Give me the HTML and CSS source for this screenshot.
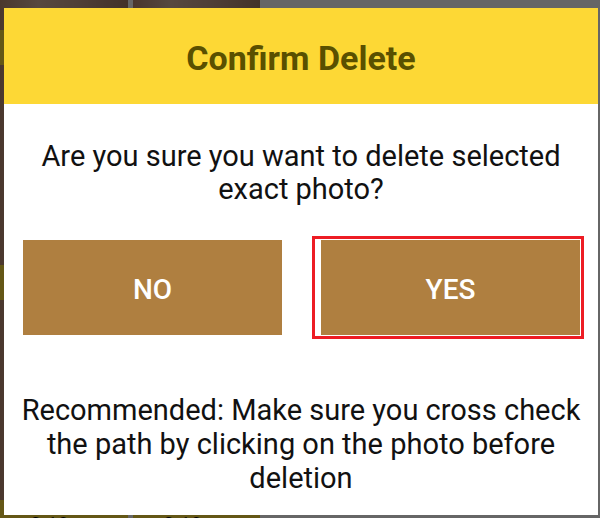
FILE: index.html
```html
<!DOCTYPE html>
<html lang="en">
  <head>
    <meta charset="UTF-8" />
    <meta name="viewport" content="width=device-width, initial-scale=1.0" />
    <title>Confirm Delete</title>
    <link rel="stylesheet" href="styles.css">
  </head>
  <body>
    <div class="screen">
      <div class="gallery">
        <div class="card"><div class="photo"></div><div class="info"></div></div>
        <div class="card"><div class="photo"></div><div class="info"></div></div>
        <div class="card"><div class="photo"></div><div class="info"></div></div>
        <div class="card"><div class="photo"></div><div class="info"></div></div>
        <div class="card"><div class="photo"></div><div class="info">2.19 KB</div></div>
        <div class="card"><div class="photo"></div><div class="info">2.19 KB</div></div>
      </div>
    </div>
    <div class="scrim"></div>

    <div class="dialog">
      <h2 class="dialog-title">Confirm Delete</h2>
      <p class="dialog-text">Are you sure you want to delete selected exact photo?</p>
      <div class="actions">
        <button class="btn">NO</button>
        <div class="focus-ring">
          <button class="btn">YES</button>
        </div>
      </div>
      <p class="dialog-note">Recommended: Make sure you cross check the path by clicking on the photo before deletion</p>
    </div>
  </body>
</html>
```

FILE: styles.css
```css
body {
  font-family: Roboto, "Noto Sans", Arial, sans-serif;
  margin: 0;
  background-color: #ffffff;
  overflow: hidden;
}
.screen {
  height: 518px;
  overflow: hidden;
}
.gallery {
  width: 260px;
  display: grid;
  grid-template-columns: 128px 127px;
  column-gap: 5px;
  margin-top: -170px;
}
.card {
  display: flex;
  flex-direction: column;
}
.photo {
  height: 200px;
  background: linear-gradient(90deg, #b98a72 0%, #d9b49e 30%, #c6a08a 60%, #a87c66 100%);
}
.info {
  height: 35px;
  background: #fbd937;
  color: #000;
  font-size: 20px;
  line-height: 20px;
  padding: 15px 30px 0;
  box-sizing: border-box;
}
.scrim {
  position: fixed;
  inset: 0;
  background: rgba(0, 0, 0, 0.6);
}
.dialog {
  position: fixed;
  left: 4px;
  top: 8px;
  width: 594px;
  height: 507px;
  background: #ffffff;
  display: flex;
  flex-direction: column;
}
.dialog-title {
  margin: 0;
  height: 96px;
  background: #fdd835;
  color: #5a5000;
  font-size: 34px;
  font-weight: bold;
  text-align: center;
  line-height: 100px;
}
.dialog-text {
  margin: 36px 20px 0;
  font-size: 29px;
  line-height: 33px;
  text-align: center;
  color: #111;
}
.actions {
  display: flex;
  align-items: center;
  gap: 30px;
  padding-left: 19px;
  margin-top: 30px;
}
.btn {
  width: 259px;
  height: 95px;
  border: none;
  background-color: #af7f40;
  color: white;
  font-family: Roboto, "Noto Sans", Arial, sans-serif;
  font-size: 28px;
  font-weight: 500;
  padding-top: 4px;
  cursor: pointer;
}
.focus-ring {
  border: 3px solid #ed1c24;
  padding: 1px 1px 1px 6px;
  background: #ffffff;
  display: flex;
}
.dialog-note {
  margin: 54px 10px 0;
  font-size: 29px;
  line-height: 34px;
  text-align: center;
  color: #111;
}
```
